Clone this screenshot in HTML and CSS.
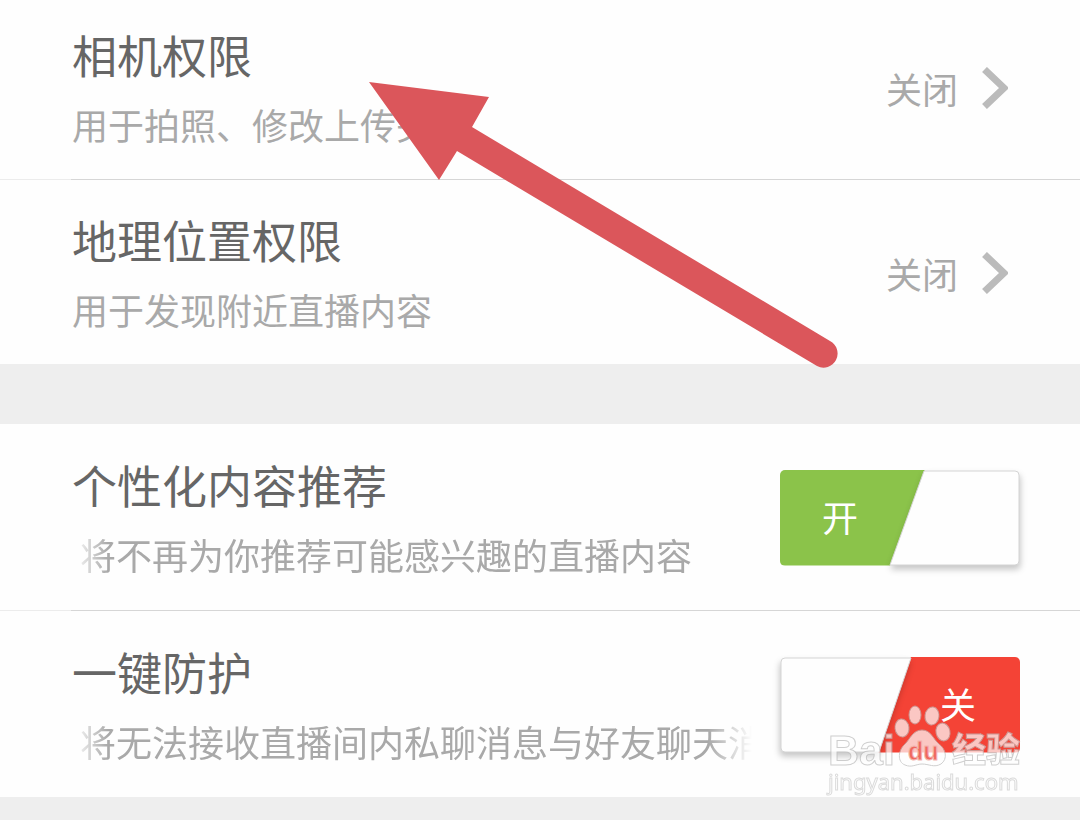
FILE: index.html
```html
<!DOCTYPE html>
<html lang="zh-CN">
<head>
<meta charset="utf-8">
<title>隐私设置</title>
<link rel="stylesheet" href="styles.css">
</head>
<body>
<main class="settings">
  <section class="group group-links">
    <a class="row" href="#camera">
      <span class="info">
        <span class="title">相机权限</span>
        <span class="desc">用于拍照、修改上传头像</span>
      </span>
      <span class="value">关闭</span>
      <svg class="chevron" viewBox="0 0 26 42" aria-hidden="true"><path d="M2.5 2.5 22 21 2.5 39.5"/></svg>
    </a>
    <a class="row" href="#location">
      <span class="info">
        <span class="title">地理位置权限</span>
        <span class="desc">用于发现附近直播内容</span>
      </span>
      <span class="value">关闭</span>
      <svg class="chevron" viewBox="0 0 26 42" aria-hidden="true"><path d="M2.5 2.5 22 21 2.5 39.5"/></svg>
    </a>
  </section>
  <section class="group group-switches">
    <div class="row">
      <label class="info" for="recommend">
        <span class="title">个性化内容推荐</span>
        <span class="desc scrolling">将不再为你推荐可能感兴趣的直播内容</span>
      </label>
      <span class="switch switch-on">
        <input class="switch-input" id="recommend" type="checkbox" checked>
        <span class="switch-face"><span class="switch-text">开</span></span>
        <svg class="switch-thumb" viewBox="0 0 240 96" aria-hidden="true"><path d="M144 1H235Q239 1 239 5V91Q239 95 235 95H110Z"/></svg>
      </span>
    </div>
    <div class="row">
      <label class="info" for="protect">
        <span class="title">一键防护</span>
        <span class="desc scrolling">将无法接收直播间内私聊消息与好友聊天消息</span>
      </label>
      <span class="switch switch-off">
        <input class="switch-input" id="protect" type="checkbox">
        <span class="switch-face"><span class="switch-text">关</span></span>
        <svg class="switch-thumb" viewBox="0 0 240 96" aria-hidden="true"><path d="M131 1H5Q1 1 1 5V91Q1 95 5 95H99Z"/></svg>
      </span>
    </div>
  </section>
</main>

<svg class="pointer" viewBox="0 0 470 288" aria-hidden="true">
  <path d="M1 1 121 16 104 46 462 260A14 14 0 0 1 449 285L89 70 71 99Z"/>
</svg>

<svg class="watermark" viewBox="0 0 200 100">
  <g class="mark">
    <text class="mark-latin" x="2" y="63">Bai</text>
    <ellipse cx="76" cy="26" rx="7" ry="9" transform="rotate(-8 76 26)"/>
    <ellipse cx="89" cy="13" rx="6" ry="9"/>
    <ellipse cx="106" cy="14" rx="7" ry="9" transform="rotate(8 106 14)"/>
    <ellipse cx="117" cy="30" rx="7" ry="9" transform="rotate(-12 117 30)"/>
    <path d="M96 28C87 28 84 37 79 42C72 48 71 60 79 63C86 66 90 62 96 62C103 62 108 66 115 62C122 57 120 47 113 42C107 37 105 28 96 28Z"/>
    <text class="mark-cjk" x="126" y="60">经验</text>
    <text class="mark-site" x="2" y="88">jingyan.baidu.com</text>
  </g>
  <text class="mark-du" x="82" y="58">du</text>
</svg>
</body>
</html>
```
FILE: styles.css
```css
* {
  box-sizing: border-box;
}

body {
  margin: 0;
  min-height: 100vh;
  position: relative;
  overflow: hidden;
  background: #eee;
  color: #666;
  font-family: "Noto Sans CJK SC", sans-serif;
}

.settings {
  display: flex;
  flex-direction: column;
  gap: 60px;
  margin-top: -5px;
}

.group {
  background: #fefefe;
}

.row {
  display: flex;
  align-items: center;
  gap: 24px;
  padding: 28px 72px 27px;
  color: inherit;
  text-decoration: none;
}

.group-switches .row {
  padding: 29px 60px 28px 72px;
}

.row:not(:last-child) {
  border-bottom: 1px solid;
  border-image: linear-gradient(to right, #ececec 72px, #d6d6d6 72px) 1;
}

.info {
  display: flex;
  flex: 1;
  flex-direction: column;
  gap: 9px;
  min-width: 0;
}

.title {
  font-size: 45px;
  line-height: 64px;
}

.desc {
  overflow: hidden;
  color: #a9a9a9;
  font-size: 36px;
  line-height: 56px;
  white-space: nowrap;
}

.scrolling {
  padding-left: 8px;
  mask-image: linear-gradient(to right, transparent, #000 36px, #000 calc(100% - 48px), transparent calc(100% - 4px));
}

.value {
  color: #a9a9a9;
  font-size: 36px;
  line-height: 48px;
}

.chevron {
  width: 26px;
  height: 42px;
  fill: none;
  stroke: #bbb;
  stroke-width: 7;
}

.switch {
  position: relative;
  display: block;
  width: 240px;
  height: 96px;
}

.switch-input {
  position: absolute;
  inset: 0;
  z-index: 1;
  width: 100%;
  height: 100%;
  margin: 0;
  opacity: 0;
}

.switch-face {
  display: flex;
  align-items: center;
  height: 100%;
  padding-bottom: 4px;
  border-radius: 5px;
  color: #fff;
  font-size: 36px;
  line-height: 48px;
}

.switch-on .switch-face {
  width: 145px;
  padding-left: 42px;
  border-radius: 5px 0 0 5px;
  background: #8bc34a;
  clip-path: polygon(0 0, 100% 0, 110px 100%, 0 100%);
}

.switch-off .switch-face {
  justify-content: flex-end;
  width: 142px;
  margin-left: auto;
  padding-right: 44px;
  border-radius: 0 5px 5px 0;
  background: #f44336;
  clip-path: polygon(33px 0, 100% 0, 100% 100%, 0 100%);
}

.switch-thumb {
  position: absolute;
  inset: 0;
  overflow: visible;
  fill: #fefefe;
  stroke: #d4d4d4;
  stroke-width: 1;
  filter: drop-shadow(1px 4px 3px rgba(0, 0, 0, 0.22));
}

.switch-off .switch-thumb {
  filter: drop-shadow(-1px 4px 3px rgba(0, 0, 0, 0.22));
}

.pointer {
  position: absolute;
  top: 81px;
  left: 368px;
  width: 470px;
  height: 288px;
  fill: #db565b;
  pointer-events: none;
}

.watermark {
  position: absolute;
  top: 702px;
  left: 826px;
  width: 200px;
  height: 100px;
  pointer-events: none;
}

.mark {
  fill: #fff;
  stroke: #bbb;
  stroke-width: 1;
  opacity: 0.7;
}

.mark-latin {
  font: bold 43px "Liberation Sans", sans-serif;
}

.mark-cjk {
  font: 900 34px "Noto Sans CJK SC", sans-serif;
}

.mark-site {
  font: 22px "Noto Sans", sans-serif;
  stroke: #ccc;
}

.mark-du {
  font: bold 25px "Liberation Sans", sans-serif;
  fill: #f0685f;
  stroke: #f3b5b0;
  stroke-width: 1;
}
```
